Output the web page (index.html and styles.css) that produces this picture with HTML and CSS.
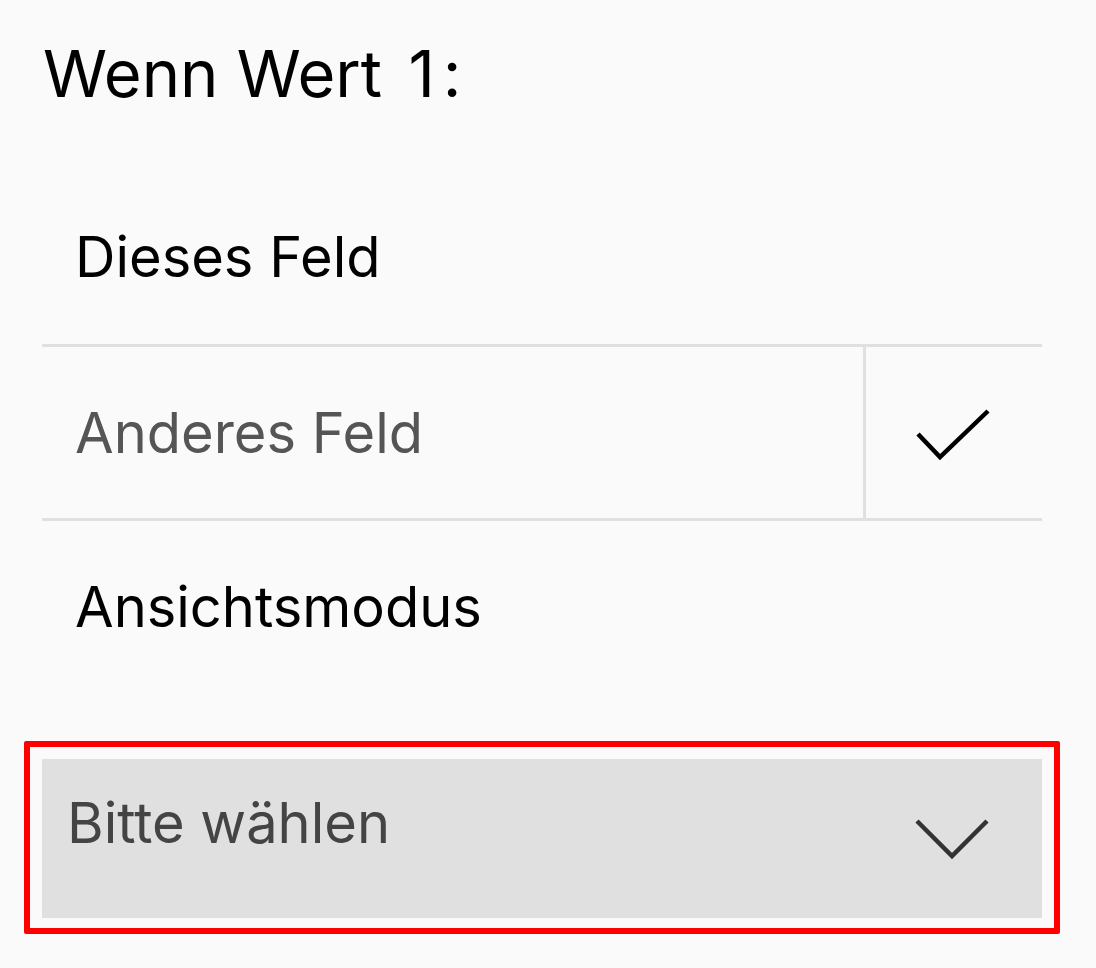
FILE: index.html
```html
<!DOCTYPE html>
<html lang="de">
<head>
<meta charset="utf-8">
<title>Wenn Wert 1</title>
<link rel="stylesheet" href="styles.css">
</head>
<body>
<div class="page">
  <h1 class="title">Wenn Wert <span class="num">1</span>:</h1>
  <ul class="options">
    <li class="option"><span class="label">Dieses Feld</span></li>
    <li class="option selected"><span class="label">Anderes Feld</span><span class="check"><svg width="76" height="54" viewBox="0 0 76 54"><polyline points="3,26 25,49 73,3" fill="none" stroke="#000" stroke-width="4.5"/></svg></span></li>
    <li class="option"><span class="label">Ansichtsmodus</span></li>
  </ul>
  <div class="select-wrap">
    <div class="select">
      <span class="select-text">Bitte wählen</span>
      <span class="chevron"><svg width="76" height="44" viewBox="0 0 76 44"><polyline points="3,4 38,39 73,4" fill="none" stroke="#333" stroke-width="4.5"/></svg></span>
    </div>
  </div>
</div>
</body>
</html>
```

FILE: styles.css
```css
html, body {
  margin: 0;
  padding: 0;
  background: #fafafa;
}
body {
  font-family: Inter, "Noto Sans", sans-serif;
  color: #000;
}
.page {
  width: 1096px;
  height: 968px;
  box-sizing: border-box;
  padding: 34px 0 0 42px;
}
.title {
  margin: 0 0 0 1px;
  font-size: 65px;
  font-weight: 400;
  line-height: 80px;
  height: 80px;
}
.num {
  margin: 0 8px 0 8px;
}
.options {
  list-style: none;
  margin: 56px 0 0 0;
  padding: 0;
  width: 1000px;
}
.option {
  display: flex;
  align-items: stretch;
  height: 174px;
  box-sizing: border-box;
}
.option + .option {
  border-top: 3px solid #e0e0e0;
}
.label {
  flex: 1;
  display: flex;
  align-items: center;
  padding-left: 33px;
  font-size: 56px;
  line-height: 70px;
  color: #000;
}
.selected .label {
  color: #555;
}
.check {
  width: 176px;
  border-left: 3px solid #e0e0e0;
  display: flex;
  align-items: center;
  justify-content: center;
}
.check svg {
  margin: 5px 2px 0 0;
}
.select-wrap {
  margin: 49px 0 0 -18px;
  width: 1036px;
  box-sizing: border-box;
  border: 6px solid #f00;
  border-radius: 2px;
  padding: 12px 12px 10px 12px;
}
.select {
  height: 159px;
  background: #e0e0e0;
  display: flex;
  align-items: center;
  justify-content: space-between;
  padding: 0 52px 0 25px;
}
.select-text {
  font-size: 56px;
  line-height: 70px;
  color: #444;
  margin-top: -32px;
}
.chevron {
  display: flex;
}
```
